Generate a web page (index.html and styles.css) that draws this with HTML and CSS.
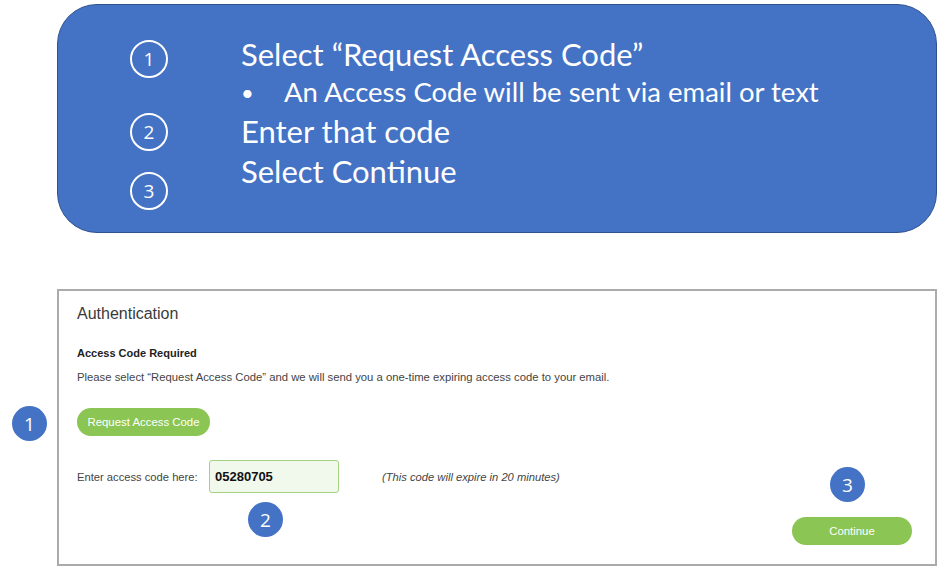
FILE: index.html
```html
<!DOCTYPE html>
<html>
<head>
<meta charset="utf-8">
<link rel="stylesheet" href="styles.css">
</head>
<body>
<div class="page">
  <section class="steps">
    <div class="step-nums">
      <span class="ring r1">1</span>
      <span class="ring r2">2</span>
      <span class="ring r3">3</span>
    </div>
    <div class="step-text">
      <div class="line l1">Select “Request Access Code”</div>
      <div class="line l2"><span class="bullet">•</span>An Access Code will be sent via email or text</div>
      <div class="line l3">Enter that code</div>
      <div class="line l4">Select Continue</div>
    </div>
  </section>

  <section class="auth">
    <h1 class="auth-title">Authentication</h1>
    <h2 class="auth-sub">Access Code Required</h2>
    <p class="auth-desc">Please select “Request Access Code” and we will send you a one-time expiring access code to your email.</p>
    <div class="req-row">
      <button class="btn req-btn">Request Access Code</button>
      <span class="badge b1">1</span>
    </div>
    <div class="code-row">
      <label class="code-label">Enter access code here:</label>
      <div class="code-input">05280705<span class="badge b2">2</span></div>
      <span class="code-note">(This code will expire in 20 minutes)</span>
    </div>
    <div class="cont-row">
      <button class="btn cont-btn">Continue<span class="badge b3">3</span></button>
    </div>
  </section>
</div>
</body>
</html>
```

FILE: styles.css
```css
html, body {
  margin: 0;
  padding: 0;
  background: #ffffff;
}

.page {
  width: 942px;
  height: 570px;
  position: relative;
  overflow: hidden;
}

/* ---------- Top instruction box ---------- */
.steps {
  box-sizing: border-box;
  margin: 4px 0 0 57px;
  width: 880px;
  height: 229px;
  background: #4472c4;
  border: 1.5px solid #2f528f;
  border-radius: 40px;
  display: flex;
  color: #ffffff;
  font-family: Lato, "Open Sans", sans-serif;
}

.step-nums {
  width: 38px;
  margin-left: 72px;
  display: flex;
  flex-direction: column;
}

.ring {
  box-sizing: border-box;
  width: 38px;
  height: 38px;
  border: 2px solid #ffffff;
  border-radius: 50%;
  display: flex;
  align-items: center;
  justify-content: center;
  font-size: 19px;
  font-family: "Open Sans", sans-serif;
}
.r1 { margin-top: 35px; }
.r2 { margin-top: 35px; }
.r3 { margin-top: 21px; }

.step-text {
  margin-left: 73px;
  padding-top: 30px;
}

.line {
  font-size: 31px;
  white-space: nowrap;
}
.l1 { line-height: 38px; }
.l2 { font-size: 27.5px; line-height: 37px; }
.l3 { line-height: 40px; }
.l4 { line-height: 40px; }

.bullet {
  display: inline-block;
  width: 43px;
  padding-left: 0;
  box-sizing: border-box;
  font-size: 22px;
  vertical-align: 1px;
}

/* ---------- Authentication panel ---------- */
.auth {
  box-sizing: border-box;
  margin: 56px 0 0 57px;
  width: 880px;
  height: 277px;
  border: 2px solid #ababab;
  padding: 13px 18px 0 18px;
  font-family: "Liberation Sans", Arial, sans-serif;
  color: #333333;
}

.auth-title {
  margin: 0;
  font-size: 16px;
  font-weight: normal;
  line-height: 20px;
  color: #3a3a3a;
}

.auth-sub {
  margin: 22px 0 0 0;
  font-size: 11px;
  font-weight: bold;
  line-height: 14px;
  color: #222222;
}

.auth-desc {
  margin: 10px 0 0 0;
  font-size: 11.3px;
  line-height: 14px;
  color: #444444;
}

.btn {
  border: none;
  background: #8bc553;
  color: #ffffff;
  font-family: "Liberation Sans", Arial, sans-serif;
  font-size: 11.4px;
  border-radius: 14px;
  padding: 0;
  cursor: pointer;
}

.req-row {
  margin-top: 24px;
  height: 28px;
  display: flex;
  align-items: center;
}

.req-btn {
  width: 133px;
  height: 28px;
  position: relative;
}

.badge {
  position: absolute;
  width: 35px;
  height: 35px;
  border-radius: 50%;
  background: #4472c4;
  color: #ffffff;
  font-family: "Open Sans", sans-serif;
  font-size: 19px;
  font-weight: normal;
  font-style: normal;
  display: flex;
  align-items: center;
  justify-content: center;
}

.b1 {
  left: 12px;
  top: 406px;
}

.code-row {
  margin-top: 24px;
  display: flex;
  align-items: center;
  height: 33px;
}

.code-label {
  font-size: 11.2px;
  color: #444444;
  width: 132px;
}

.code-input {
  box-sizing: border-box;
  width: 130px;
  height: 33px;
  background: #f1f8ec;
  border: 1.5px solid #a5d27e;
  border-radius: 3px;
  padding-left: 5px;
  display: flex;
  align-items: center;
  font-size: 13px;
  font-weight: bold;
  color: #111111;
}

.b2 {
  left: 248px;
  top: 502px;
}

.code-note {
  margin-left: 43px;
  font-size: 11.2px;
  font-style: italic;
  color: #444444;
}

.cont-row {
  margin-top: 24px;
  display: flex;
  justify-content: flex-end;
  padding-right: 5px;
}

.cont-btn {
  width: 120px;
  height: 28px;
}

.b3 {
  left: 830px;
  top: 467px;
}
```
